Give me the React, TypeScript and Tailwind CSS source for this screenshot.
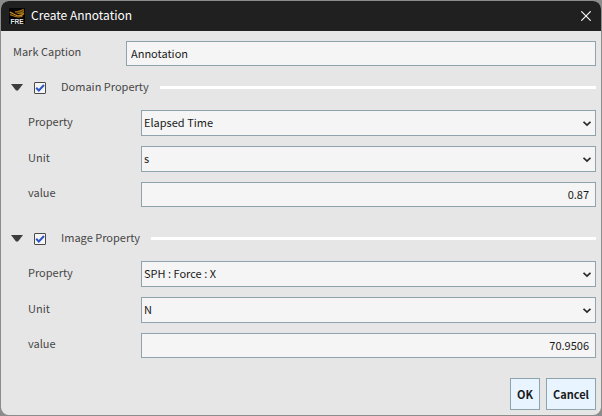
import React, { useState } from "react";

const fieldClass =
  "block w-full min-w-0 rounded-none border border-[#8fa3ad] bg-[#f5f5f5] pb-0.5 text-[#1a1a1a] outline-none focus:border-[#5d7f91]";

const AppIcon = () => (
  <svg width="16" height="16" viewBox="0 0 16 16" className="shrink-0" aria-hidden="true">
    <rect width="16" height="16" fill="#050505" />
    <path d="M5.5 3.2C8 3.4 11 2.6 14.5 0.8C15.5 2.5 15.2 4.8 13.5 6C11.5 7 8.5 6 6.5 4.8Z" fill="#9a6816" />
    <path d="M7 4.4C9.5 4.8 12 4 14.5 2.4" fill="none" stroke="#3a2708" strokeWidth="0.7" />
    <path d="M0.8 4.2C3 4.6 4.5 6.8 8 7.6C11 8.2 13.5 7.4 15 5.4" fill="none" stroke="#d0901f" strokeWidth="1.3" />
    <path d="M1 6.6C3 6.8 5 8.8 9 9C11 9.1 12.5 8.7 13.5 8" fill="none" stroke="#a87118" strokeWidth="1.1" />
    <text x="8" y="15.5" textAnchor="middle" fontSize="6.5" fontWeight="700" fontFamily="Liberation Sans, sans-serif" fill="#e4e4e4">
      FRE
    </text>
  </svg>
);

interface RowProps {
  id: string;
  label: string;
  children: React.ReactNode;
}

const Row: React.FC<RowProps> = ({ id, label, children }) => (
  <div className="flex items-center">
    <label htmlFor={id} className="w-[113px] shrink-0 pb-1">
      {label}
    </label>
    <div className="relative min-w-0 flex-1">{children}</div>
  </div>
);

interface SelectProps {
  id: string;
  options: string[];
}

const Select: React.FC<SelectProps> = ({ id, options }) => (
  <>
    <select id={id} className={`${fieldClass} h-[26px] appearance-none pr-5 pl-0.5`}>
      {options.map((option) => (
        <option key={option}>{option}</option>
      ))}
    </select>
    <svg
      width="8"
      height="6"
      viewBox="0 0 8 6"
      className="pointer-events-none absolute top-[11px] right-[5px]"
      aria-hidden="true"
    >
      <path d="M0.5 0.8L4 4.1L7.5 0.8" fill="none" stroke="#2b2b2b" strokeWidth="1.8" />
    </svg>
  </>
);

interface PropertyGroupProps {
  id: string;
  title: string;
  properties: string[];
  units: string[];
  initialValue: string;
}

const PropertyGroup: React.FC<PropertyGroupProps> = ({ id, title, properties, units, initialValue }) => {
  const [open, setOpen] = useState(true);
  const [enabled, setEnabled] = useState(true);
  const [value, setValue] = useState(initialValue);

  return (
    <section>
      <div className="flex h-[19px] items-center">
        <button
          type="button"
          aria-label={`Toggle ${title}`}
          aria-expanded={open}
          onClick={() => setOpen(!open)}
          className="-ml-0.5 w-[23px] shrink-0"
        >
          <svg width="12" height="7" viewBox="0 0 12 7" className={open ? "" : "-rotate-90"}>
            <path d="M0 0H12L7 6.5H5Z" fill="#3c3c3c" />
          </svg>
        </button>
        <span className="relative size-3 shrink-0">
          <input
            id={`${id}-enabled`}
            type="checkbox"
            checked={enabled}
            onChange={(e) => setEnabled(e.target.checked)}
            className="block size-3 appearance-none rounded-[1px] border border-[#4a4a4a] bg-[#f5f5f5]"
          />
          {enabled && (
            <svg width="12" height="12" viewBox="0 0 12 12" className="pointer-events-none absolute inset-0">
              <path d="M2.2 5.8L4.8 8.5L10 3" fill="none" stroke="#2f55c4" strokeWidth="2" />
            </svg>
          )}
        </span>
        <label htmlFor={`${id}-enabled`} className="ml-[15px] shrink-0 pb-0.5">
          {title}
        </label>
        <div className="ml-[11px] h-[3px] flex-1 bg-white" />
      </div>
      {open && (
        <div className="mt-[13px] flex flex-col gap-2.5 pl-[15px]">
          <Row id={`${id}-property`} label="Property">
            <Select id={`${id}-property`} options={properties} />
          </Row>
          <Row id={`${id}-unit`} label="Unit">
            <Select id={`${id}-unit`} options={units} />
          </Row>
          <Row id={`${id}-value`} label="value">
            <input
              id={`${id}-value`}
              type="text"
              value={value}
              onChange={(e) => setValue(e.target.value)}
              className={`${fieldClass} h-[25px] px-1.5 text-right`}
            />
          </Row>
        </div>
      )}
    </section>
  );
};

const App: React.FC = () => {
  const [caption, setCaption] = useState("Annotation");

  return (
    <div className="flex min-h-screen flex-col bg-[#8c8c8c] p-px font-['Noto_Sans_CJK_SC',sans-serif] text-[11px] text-[#464646]">
      <div className="flex flex-1 flex-col overflow-hidden rounded-lg bg-[#e6e6e6]">
        <header className="flex h-[30px] items-center bg-[#202020] px-2 text-white">
          <AppIcon />
          <h1 className="ml-1.5 flex-1 pb-0.5 text-xs">Create Annotation</h1>
          <button type="button" aria-label="Close" className="flex size-3.5 items-center justify-center">
            <svg width="10" height="10" viewBox="0 0 10 10">
              <path d="M0.3 0.3L9.7 9.7M9.7 0.3L0.3 9.7" fill="none" stroke="#ffffff" strokeWidth="1.1" />
            </svg>
          </button>
        </header>

        <form className="pt-2.5 pr-[5px] pb-[5px] pl-3" onSubmit={(e) => e.preventDefault()}>
          <Row id="caption" label="Mark Caption">
            <input
              id="caption"
              type="text"
              value={caption}
              onChange={(e) => setCaption(e.target.value)}
              className={`${fieldClass} h-[25px] px-1`}
            />
          </Row>
          <div className="mt-3 flex flex-col gap-[22px]">
            <PropertyGroup
              id="domain"
              title="Domain Property"
              properties={["Elapsed Time"]}
              units={["s"]}
              initialValue="0.87"
            />
            <PropertyGroup
              id="image"
              title="Image Property"
              properties={["SPH : Force : X"]}
              units={["N"]}
              initialValue="70.9506"
            />
          </div>
          <div className="mt-5 flex justify-end gap-1.5 font-bold text-[#1a1a1a]">
            <button type="submit" className="h-8 w-[30px] border border-[#8fa3ad] bg-[#e8f4ff] hover:bg-[#d5eaff]">
              OK
            </button>
            <button type="button" className="h-8 w-[50px] border border-[#8fa3ad] bg-[#e8f4ff] hover:bg-[#d5eaff]">
              Cancel
            </button>
          </div>
        </form>
      </div>
    </div>
  );
};

export default App;
